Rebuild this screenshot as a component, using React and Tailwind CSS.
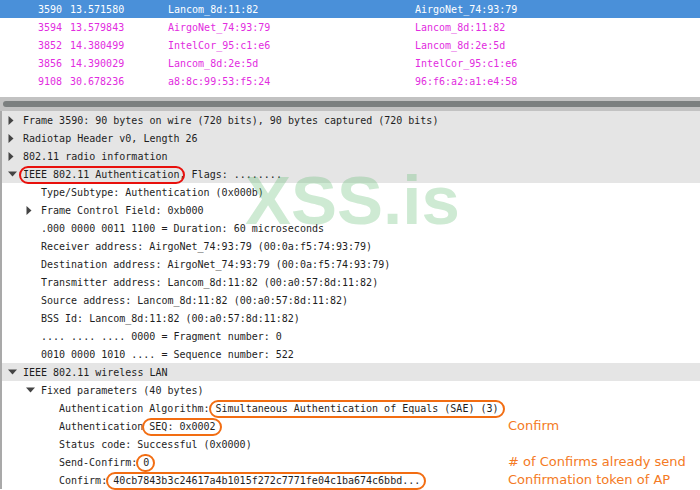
import React from 'react';

const mono = { fontFamily: '"DejaVu Sans Mono", "Liberation Mono", monospace' };

const packets = [
  { no: '3590', time: '13.571580', src: 'Lancom_8d:11:82', dst: 'AirgoNet_74:93:79', sel: true },
  { no: '3594', time: '13.579843', src: 'AirgoNet_74:93:79', dst: 'Lancom_8d:11:82' },
  { no: '3852', time: '14.380499', src: 'IntelCor_95:c1:e6', dst: 'Lancom_8d:2e:5d' },
  { no: '3856', time: '14.390029', src: 'Lancom_8d:2e:5d', dst: 'IntelCor_95:c1:e6' },
  { no: '9108', time: '30.678236', src: 'a8:8c:99:53:f5:24', dst: '96:f6:a2:a1:e4:58' },
];

const Arrow = ({ open }) =>
  open ? (
    <svg width="9" height="6" viewBox="0 0 9 6" className="shrink-0">
      <path d="M0 0.5 L9 0.5 L4.5 5.5 Z" fill="#444" />
    </svg>
  ) : (
    <svg width="6" height="9" viewBox="0 0 6 9" className="shrink-0">
      <path d="M0.5 0 L5.5 4.5 L0.5 9 Z" fill="#444" />
    </svg>
  );

// red ring round the header label
const RedOval = ({ children }) => (
  <span className="relative">
    <span className="absolute -left-[4px] -right-[5px] top-[-1px] bottom-[-2px] rounded-full border-2 border-[#e8100c]" />
    {children}
  </span>
);

// orange ring, starts right after the colon
const OrangeOval = ({ children }) => (
  <span className="relative">
    <span className="absolute -left-[1px] -right-[6px] top-[-1px] bottom-[-2px] rounded-full border-2 border-[#f26d12]" />
    {children}
  </span>
);

const Row = ({ level, arrow, gray, note, children }) => (
  <div className={`flex h-[18px] items-center ${gray ? 'bg-[#e5e5e5]' : ''}`}>
    <div className="flex w-[506px] shrink-0 items-center whitespace-pre" style={{ paddingLeft: 6 + level * 18 }}>
      <span className="flex w-[15px] shrink-0 items-center">{arrow && <Arrow open={arrow === 'open'} />}</span>
      {children}
    </div>
    {note && (
      <span className="whitespace-nowrap text-[13px] text-[#f47a24]" style={{ fontFamily: '"DejaVu Sans", sans-serif' }}>
        {note}
      </span>
    )}
  </div>
);

export default function App() {
  return (
    <div className="relative h-[490px] w-[700px] overflow-hidden bg-white text-[10px] text-[#1e1e1e]" style={mono}>
      {/* packet list */}
      <div className="h-[97px]">
        {packets.map((p) => (
          <div
            key={p.no}
            className={`flex h-[18px] items-center whitespace-pre ${p.sel ? 'bg-[#4a90d9] text-white' : 'text-[#e22ce0]'}`}
          >
            <span className="w-[64px] pr-[2px] text-right">{p.no}</span>
            <span className="ml-[6px] w-[98px]">{p.time}</span>
            <span className="w-[247px]">{p.src}</span>
            <span>{p.dst}</span>
          </div>
        ))}
      </div>

      {/* scrollbar */}
      <div className="flex h-[14px] flex-col bg-[#c2c2c2] pt-[4px] pb-[3px]">
        <div className="ml-[3px] h-[6px] rounded-l-full bg-[#7b7f7f]" />
      </div>

      {/* details tree */}
      <div className="border-l-2 border-[#a9a9a9]">
        <Row level={0} arrow="closed" gray>Frame 3590: 90 bytes on wire (720 bits), 90 bytes captured (720 bits)</Row>
        <Row level={0} arrow="closed" gray>Radiotap Header v0, Length 26</Row>
        <Row level={0} arrow="closed" gray>802.11 radio information</Row>
        <Row level={0} arrow="open" gray>
          <RedOval>IEEE 802.11 Authentication</RedOval>, Flags: ........
        </Row>
        <Row level={1}>Type/Subtype: Authentication (0x000b)</Row>
        <Row level={1} arrow="closed">Frame Control Field: 0xb000</Row>
        <Row level={1}>.000 0000 0011 1100 = Duration: 60 microseconds</Row>
        <Row level={1}>Receiver address: AirgoNet_74:93:79 (00:0a:f5:74:93:79)</Row>
        <Row level={1}>Destination address: AirgoNet_74:93:79 (00:0a:f5:74:93:79)</Row>
        <Row level={1}>Transmitter address: Lancom_8d:11:82 (00:a0:57:8d:11:82)</Row>
        <Row level={1}>Source address: Lancom_8d:11:82 (00:a0:57:8d:11:82)</Row>
        <Row level={1}>BSS Id: Lancom_8d:11:82 (00:a0:57:8d:11:82)</Row>
        <Row level={1}>.... .... .... 0000 = Fragment number: 0</Row>
        <Row level={1}>0010 0000 1010 .... = Sequence number: 522</Row>
        <Row level={0} arrow="open" gray>IEEE 802.11 wireless LAN</Row>
        <Row level={1} arrow="open">Fixed parameters (40 bytes)</Row>
        <Row level={2}>
          Authentication Algorithm:<OrangeOval> Simultaneous Authentication of Equals (SAE) (3)</OrangeOval>
        </Row>
        <Row level={2} note="Confirm">
          Authentication<OrangeOval> SEQ: 0x0002</OrangeOval>
        </Row>
        <Row level={2}>Status code: Successful (0x0000)</Row>
        <Row level={2} note="# of Confirms already send">
          Send-Confirm:<OrangeOval> 0</OrangeOval>
        </Row>
        <Row level={2} note="Confirmation token of AP">
          Confirm:<OrangeOval> 40cb7843b3c24617a4b1015f272c7771fe04c1ba674c6bbd...</OrangeOval>
        </Row>
      </div>

      {/* watermark */}
      <div
        className="pointer-events-none absolute left-[245px] top-[166px] text-[69px] font-bold leading-none text-[#5cb96e]/30"
        style={{ fontFamily: '"Liberation Sans", Arial, sans-serif' }}
      >
        XSS.is
      </div>
    </div>
  );
}
